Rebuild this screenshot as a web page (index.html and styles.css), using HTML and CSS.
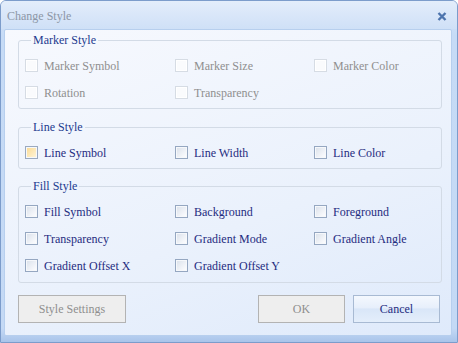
FILE: index.html
```html
<!DOCTYPE html>
<html lang="en">
<head>
    <meta charset="UTF-8">
    <title>Change Style</title>
    <link rel="stylesheet" href="styles.css">
</head>
<body>
    <div class="window">
        <div class="titlebar">
            <span class="title">Change Style</span>
            <svg class="close" width="10" height="9" viewBox="0 0 10 9">
                <path d="M1.5,1 L8.5,8 M8.5,1 L1.5,8" stroke="#4d74ad" stroke-width="2.4" fill="none"/>
            </svg>
        </div>

        <div class="panel">
            <fieldset class="group">
                <legend>Marker Style</legend>
                <div class="options">
                    <label class="option disabled"><span class="box"></span>Marker Symbol</label>
                    <label class="option disabled"><span class="box"></span>Marker Size</label>
                    <label class="option disabled"><span class="box"></span>Marker Color</label>
                    <label class="option disabled"><span class="box"></span>Rotation</label>
                    <label class="option disabled"><span class="box"></span>Transparency</label>
                </div>
            </fieldset>

            <fieldset class="group">
                <legend>Line Style</legend>
                <div class="options">
                    <label class="option"><span class="box hot"></span>Line Symbol</label>
                    <label class="option"><span class="box"></span>Line Width</label>
                    <label class="option"><span class="box"></span>Line Color</label>
                </div>
            </fieldset>

            <fieldset class="group">
                <legend>Fill Style</legend>
                <div class="options">
                    <label class="option"><span class="box"></span>Fill Symbol</label>
                    <label class="option"><span class="box"></span>Background</label>
                    <label class="option"><span class="box"></span>Foreground</label>
                    <label class="option"><span class="box"></span>Transparency</label>
                    <label class="option"><span class="box"></span>Gradient Mode</label>
                    <label class="option"><span class="box"></span>Gradient Angle</label>
                    <label class="option"><span class="box"></span>Gradient Offset X</label>
                    <label class="option"><span class="box"></span>Gradient Offset Y</label>
                </div>
            </fieldset>

            <div class="buttons">
                <button class="btn btn-wide" disabled>Style Settings</button>
                <span class="spacer"></span>
                <button class="btn" disabled>OK</button>
                <button class="btn btn-active">Cancel</button>
            </div>
        </div>
    </div>
</body>
</html>
```

FILE: styles.css
```css
:root {
    --text-color: #1f2c80;
    --legend-color: #1d3b8f;
    --disabled-color: #8f8f8f;
    --group-border: #d3dbe6;
    --ui-font: "Liberation Serif", Tinos, "Times New Roman", Times, "DejaVu Serif", serif;
}
html, body {
    margin: 0;
    padding: 0;
}
body {
    font-family: var(--ui-font);
    font-size: 12px;
    color: var(--text-color);
    background: #ffffff;
}
.window {
    width: 458px;
    height: 343px;
    box-sizing: border-box;
    border: 1px solid #7c9ccb;
    border-radius: 6px 6px 0 0;
    background: linear-gradient(#dde9fa, #c6dbf6 10%, #c4d9f5 96%, #a9c4ea);
    display: flex;
    flex-direction: column;
    padding: 0 5px 6px 3px;
}
.titlebar {
    height: 28px;
    display: flex;
    align-items: center;
    justify-content: space-between;
    padding: 0 10px 0 6px;
    background: linear-gradient(#e3edfb, #cfe0f7);
    margin: 0 -5px 0 -3px;
    border-radius: 5px 5px 0 0;
}
.title {
    color: #8c96a6;
    margin-top: 3px;
}
.close {
    margin-top: 3px;
}
.panel {
    flex: 1;
    border: 1px solid #b7cfee;
    border-radius: 2px;
    background: linear-gradient(160deg, #f7f9fe, #eaf1fc 60%, #dfeafb);
    padding: 2px 9px 0 13px;
    display: flex;
    flex-direction: column;
}
.group {
    margin: 0 0 9px 0;
    padding: 4px 0 2px 6px;
    border: 1px solid var(--group-border);
    border-radius: 3px;
}
.group:first-child {
    margin-bottom: 10px;
}
.group:last-of-type {
    padding-bottom: 3px;
}
.group legend {
    color: var(--legend-color);
    line-height: 16px;
    padding: 0 2px;
    margin-left: 6px;
}
.options {
    display: grid;
    grid-template-columns: 150px 139px 1fr;
    grid-auto-rows: 27px;
}
.option {
    display: flex;
    align-items: center;
    gap: 6px;
    line-height: 14px;
}
.option.disabled {
    color: var(--disabled-color);
}
.box {
    width: 13px;
    height: 13px;
    box-sizing: border-box;
    border: 1px solid #95a7c1;
    background: linear-gradient(135deg, #d9e0ea, #f4f6fa 70%, #ffffff);
    box-shadow: inset 0 0 0 1px #f6f8fb;
}
.disabled .box {
    border-color: #d6dce4;
    background: #fafbfd;
    box-shadow: inset 0 0 0 1px #ffffff;
}
.box.hot {
    border-color: #9aa9bf;
    background: linear-gradient(135deg, #fbd98f, #fdebbf 60%, #fff6de);
}
.buttons {
    display: flex;
    gap: 8px;
    margin-top: 3px;
    padding-right: 2px;
}
.spacer {
    flex: 1;
}
.btn {
    width: 87px;
    height: 28px;
    font-family: var(--ui-font);
    font-size: 12px;
    border: 1px solid #a8bad3;
    background: linear-gradient(#f4f8fe, #e7effb 45%, #d9e6f8 50%, #e4eefb);
    color: var(--text-color);
    padding: 0;
}
.btn-wide {
    width: 108px;
}
.btn:disabled {
    border-color: #b3b3b3;
    background: #eeeeee;
    color: var(--disabled-color);
}
```
